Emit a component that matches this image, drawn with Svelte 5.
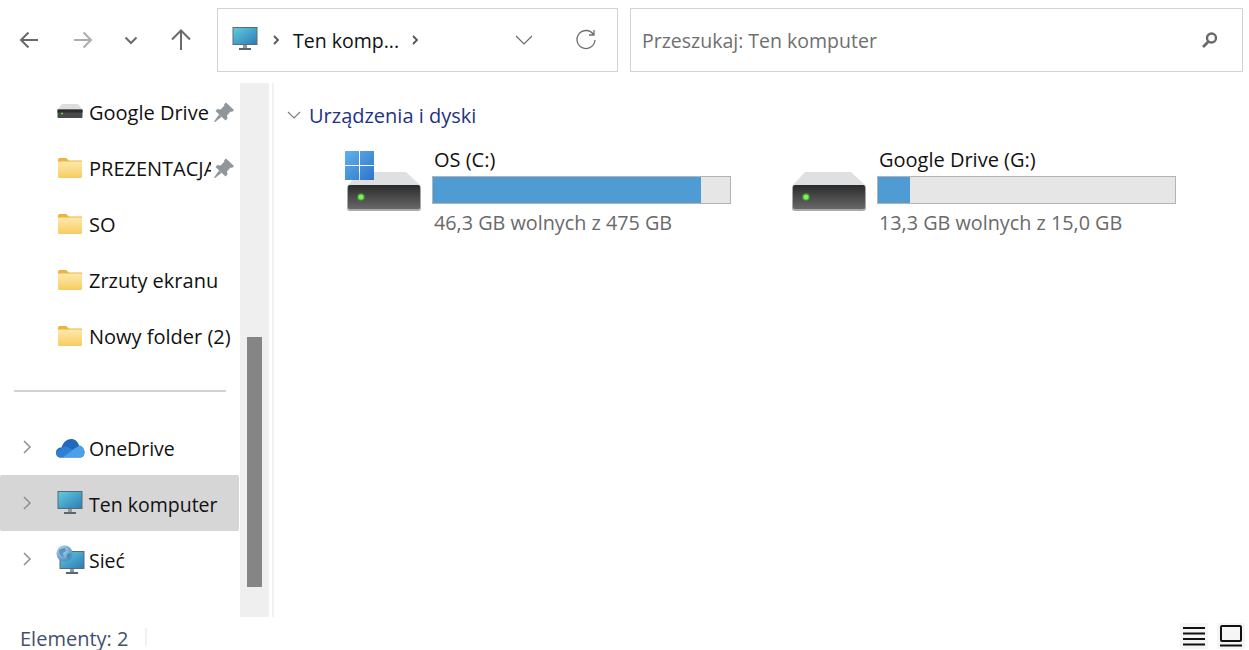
<script>
  const quick = [
    { name: 'Google Drive', icon: 'drive', pin: true },
    { name: 'PREZENTACJA', icon: 'folder', pin: true },
    { name: 'SO', icon: 'folder' },
    { name: 'Zrzuty ekranu', icon: 'folder' },
    { name: 'Nowy folder (2)', icon: 'folder' }
  ]
  const roots = [
    { name: 'OneDrive', icon: 'cloud' },
    { name: 'Ten komputer', icon: 'pc', active: true },
    { name: 'Sieć', icon: 'net' }
  ]
  const drives = [
    { name: 'OS (C:)', free: '46,3 GB wolnych z 475 GB', used: 90.2, win: true },
    { name: 'Google Drive (G:)', free: '13,3 GB wolnych z 15,0 GB', used: 10.9, win: false }
  ]
</script>

{#snippet pc(w)}
  <svg width={w} height={w} viewBox="0 0 26 26">
    <defs>
      <linearGradient id="screen" x1="0" y1="0" x2="1" y2="1">
        <stop offset="0" stop-color="#5fcbdc" />
        <stop offset="1" stop-color="#2f7cb8" />
      </linearGradient>
    </defs>
    <rect x="0.5" y="1" width="25" height="18" fill="#5d6a76" />
    <rect x="1.5" y="2" width="23" height="16" fill="url(#screen)" />
    <rect x="11" y="19" width="4" height="3" fill="#8d99a3" />
    <rect x="7" y="22" width="12" height="2" fill="#596570" />
  </svg>
{/snippet}

{#snippet driveBody()}
  <svg class="hdd" width="76" height="42" viewBox="0 0 76 42">
    <defs>
      <linearGradient id="front" x1="0" y1="0" x2="0" y2="1">
        <stop offset="0" stop-color="#2b2b2b" />
        <stop offset="1" stop-color="#686868" />
      </linearGradient>
    </defs>
    <path d="M14 2H60L74 15H2Z" fill="#dfe0e1" />
    <rect x="1" y="15" width="74" height="26" rx="3" fill="#a9a9a9" />
    <rect x="2" y="15" width="72" height="24" rx="2" fill="url(#front)" />
    <circle cx="15" cy="27" r="3.8" fill="#3fc82c" opacity="0.6" />
    <circle cx="15" cy="27" r="2.6" fill="#86ee55" />
  </svg>
{/snippet}

{#snippet winLogo()}
  <svg class="win" width="29" height="29" viewBox="0 0 29 29">
    <defs>
      <linearGradient id="wl" x1="0" y1="0" x2="1" y2="1">
        <stop offset="0" stop-color="#5fb2ea" />
        <stop offset="1" stop-color="#2f74ca" />
      </linearGradient>
    </defs>
    <path d="M0 0H14V14H0ZM15 0H29V14H15ZM0 15H14V29H0ZM15 15H29V29H15Z" fill="url(#wl)" />
  </svg>
{/snippet}

{#snippet navIcon(kind)}
  {#if kind === 'folder'}
    <svg width="26" height="22" viewBox="0 0 26 22">
      <defs>
        <linearGradient id="fold" x1="0" y1="0" x2="0" y2="1">
          <stop offset="0" stop-color="#fde9ac" />
          <stop offset="1" stop-color="#f6cd62" />
        </linearGradient>
      </defs>
      <path d="M1 2.5Q1 1 2.5 1H9L12 3.5H25V6H1Z" fill="#eeb33f" />
      <rect x="1" y="4.5" width="24" height="16.5" rx="1" fill="url(#fold)" />
    </svg>
  {:else if kind === 'drive'}
    <svg width="26" height="22" viewBox="0 0 26 22">
      <path d="M5 3H21L25.500 8.500H0.500Z" fill="#dcdede" />
      <rect x="0.500" y="8.500" width="25" height="8.500" rx="1" fill="#4a4a4a" />
      <rect x="0.500" y="8.500" width="25" height="3" fill="#2d2d2d" />
      <circle cx="5" cy="12.500" r="1" fill="#6fe04a" />
    </svg>
  {:else if kind === 'cloud'}
    <svg class="cloud" width="30" height="22" viewBox="0 0 30 22">
      <defs>
        <clipPath id="cl">
          <path d="M5 19.500C2 19.500 0 17.500 0 14.500C0 11.500 2.500 9.500 5.500 9.500C7 5 10.500 1 15 1C19 1 22 3.500 23 7.500C26.500 8 28.500 11 28.500 14.500C28.500 17.500 26.500 19.500 24 19.500Z" />
        </clipPath>
      </defs>
      <g clip-path="url(#cl)">
        <rect width="30" height="22" fill="#2268bd" />
        <path d="M0 14L9 8 20 13 6 20H0Z" fill="#2f7fd6" />
        <path d="M6 20L18 11 24 7 30 10V20Z" fill="#4ba0e8" />
      </g>
    </svg>
  {:else if kind === 'pc'}
    {@render pc(26)}
  {:else}
    <span class="net">
      {@render pc(26)}
      <svg class="globe" width="17" height="17" viewBox="0 0 17 17">
        <defs>
          <radialGradient id="gl" cx="0.35" cy="0.3" r="0.8">
            <stop offset="0" stop-color="#b9dcf2" />
            <stop offset="1" stop-color="#3f84bb" />
          </radialGradient>
        </defs>
        <circle cx="8.500" cy="8.500" r="8" fill="url(#gl)" />
        <path d="M3 5Q6 2.500 9 3L10 6 7 8 8 12 5 11 3 8Z" fill="#5b96bc" />
        <path d="M11 9L15 8 14 12 11 14Z" fill="#4d88ad" />
      </svg>
    </span>
  {/if}
{/snippet}

{#snippet chev()}
  <svg class="chev" width="10" height="16" viewBox="0 0 10 16"><path d="M2 2L8 8 2 14" fill="none" stroke="#8f8f8f" stroke-width="1.500" /></svg>
{/snippet}

{#snippet pinIcon()}
  <svg class="pin" width="20" height="20" viewBox="0 0 20 20">
    <path d="M12 0.500L20 8 18 10 16.500 9.500 13 13.500 13.500 16.500 11.500 18.500 1.500 9 3.500 7 6.500 7.500 10.500 3.500 10 2.500ZM5 12.500L7.500 15 1 20 0 19.500Z" fill="#8f979c" />
  </svg>
{/snippet}

<div class="app">
  <header class="toolbar">
    <nav class="arrows">
      <button class="b1" aria-label="Wstecz">
        <svg width="20" height="18" viewBox="0 0 20 18"><path d="M19 9H2M9.500 1.500L2 9 9.500 16.500" fill="none" stroke="#6a6a6a" stroke-width="2" /></svg>
      </button>
      <button class="b1" aria-label="Dalej">
        <svg width="20" height="18" viewBox="0 0 20 18"><path d="M1 9H18M10.500 1.500L18 9 10.500 16.500" fill="none" stroke="#adadad" stroke-width="2" /></svg>
      </button>
      <button class="b2" aria-label="Ostatnie">
        <svg width="14" height="9" viewBox="0 0 14 9"><path d="M1.500 1.500L7 7 12.500 1.500" fill="none" stroke="#6a6a6a" stroke-width="2" /></svg>
      </button>
      <button class="b3" aria-label="W górę">
        <svg width="20" height="22" viewBox="0 0 20 22"><path d="M10 21V2M1 10.500L10 1.500 19 10.500" fill="none" stroke="#6a6a6a" stroke-width="2" /></svg>
      </button>
    </nav>
    <div class="address box">
      {@render pc(26)}
      <svg class="sep1" width="8" height="12" viewBox="0 0 8 12"><path d="M2 2L6 6 2 10" fill="none" stroke="#555" stroke-width="1.800" /></svg>
      <span class="crumb">Ten komp...</span>
      <svg class="sep2" width="8" height="12" viewBox="0 0 8 12"><path d="M2 2L6 6 2 10" fill="none" stroke="#555" stroke-width="1.800" /></svg>
      <svg class="drop" width="18" height="10" viewBox="0 0 18 10"><path d="M1 1L9 9 17 1" fill="none" stroke="#6a6a6a" stroke-width="1.200" /></svg>
      <svg class="refresh" width="22" height="22" viewBox="0 0 22 22"><path d="M18.500 5.500A9 9 0 1 0 20 11M19 1V6H14" fill="none" stroke="#6e6e6e" stroke-width="1.300" /></svg>
    </div>
    <div class="search box">
      <span class="ph">Przeszukaj: Ten komputer</span>
      <svg width="18" height="18" viewBox="0 0 18 18"><circle cx="10.500" cy="7" r="4.500" fill="none" stroke="#6a6a6a" stroke-width="2.400" /><path d="M7.500 10.500L2 16" stroke="#6a6a6a" stroke-width="2.800" /></svg>
    </div>
  </header>

  <main class="body">
    <aside class="side">
      <div class="list">
        {#each quick as q}
          <div class="row">
            <span class="arrow"></span>
            <span class="ico">{@render navIcon(q.icon)}</span>
            <span class="label" class:clip={q.pin}>{q.name}</span>
            {#if q.pin}{@render pinIcon()}{/if}
          </div>
        {/each}
      </div>
      <div class="rule"></div>
      <div class="list">
        {#each roots as r}
          <div class="row" class:active={r.active}>
            <span class="arrow">{@render chev()}</span>
            <span class="ico">{@render navIcon(r.icon)}</span>
            <span class="label low">{r.name}</span>
          </div>
        {/each}
      </div>
    </aside>
    <div class="track"><div class="thumb"></div></div>
    <section class="content">
      <div class="group">
        <svg width="14" height="8" viewBox="0 0 14 8"><path d="M1 1L7 7 13 1" fill="none" stroke="#7a7a7a" stroke-width="1.100" /></svg>
        <span>Urządzenia i dyski</span>
      </div>
      <div class="tiles">
        {#each drives as d}
          <div class="tile">
            <div class="tile-ico">
              {@render driveBody()}
              {#if d.win}{@render winLogo()}{/if}
            </div>
            <div class="tile-info">
              <div class="name">{d.name}</div>
              <div class="bar"><div class="fill" style="width:{d.used}%"></div></div>
              <div class="free">{d.free}</div>
            </div>
          </div>
        {/each}
      </div>
    </section>
  </main>

  <footer class="status">
    <span class="count">Elementy: 2</span>
    <span class="tick"></span>
    <span class="views">
      <span class="vb">
        <svg width="24" height="20" viewBox="0 0 24 20"><path d="M1 2H23M1 7.500H23M1 13H23M1 18.500H23" stroke="#111" stroke-width="1.800" /></svg>
      </span>
      <span class="vb">
        <svg width="24" height="22" viewBox="0 0 24 22"><rect x="2" y="1" width="20" height="15" rx="1" fill="none" stroke="#111" stroke-width="2" /><path d="M1 20.500H23" stroke="#111" stroke-width="2" /></svg>
      </span>
    </span>
  </footer>
</div>

<style>
  :global(body) { margin: 0; background: #fff; }
  .app {
    width: 1249px;
    height: 650px;
    display: flex;
    flex-direction: column;
    overflow: hidden;
    font-family: "Open Sans", "Noto Sans", sans-serif;
    font-size: 20px;
    color: #111;
  }
  .toolbar {
    height: 83px;
    box-sizing: border-box;
    padding: 8px 6px 11px 2px;
    display: flex;
  }
  .arrows { display: flex; width: 215px; }
  .arrows button {
    border: 0;
    background: none;
    padding: 0;
    height: 64px;
    display: flex;
    align-items: center;
    justify-content: center;
  }
  .b1 { width: 54px; }
  .b2 { width: 42px; }
  .b3 { width: 58px; }
  .box {
    border: 1px solid #d2d2d2;
    box-sizing: border-box;
    height: 64px;
    display: flex;
    align-items: center;
  }
  .address { width: 401px; padding-left: 14px; }
  .address > svg:first-child { margin-top: -2px; }
  .sep1 { margin: 0 13px 0 14px; }
  .crumb { width: 118px; white-space: nowrap; font-size: 19.5px; }
  .drop { margin-left: 96px; }
  .refresh { margin-left: 42px; margin-top: 0; }
  .search {
    width: 613px;
    margin-left: 12px;
    padding: 0 23px 0 11px;
    justify-content: space-between;
  }
  .ph { color: #6f6f6f; font-size: 19.5px; padding-top: 1px; }
  .body { flex: 1; display: flex; min-height: 0; }
  .side { width: 240px; flex: none; padding-top: 1px; overflow: hidden; }
  .row {
    height: 56px;
    display: flex;
    align-items: center;
    border-radius: 2px;
    margin-right: 1px;
  }
  .row.active { background: #d6d6d6; }
  .chev { display: block; }
  .ico { width: 45px; height: 30px; padding-left: 13px; box-sizing: border-box; display: flex; align-items: center; }
  .cloud { margin-left: -1px; margin-top: 4px; }
  .label { white-space: nowrap; }
  .label.clip { width: 122px; overflow: hidden; flex: none; }
  .label.low { padding-top: 2px; font-size: 19.5px; }
  .row .arrow { width: 10px; padding-left: 22px; padding-right: 12px; display: flex; }
  .pin { margin-left: 3px; margin-top: -1px; flex: none; }
  .rule { height: 2px; background: #d2d2d2; margin: 26px 14px 27px; }
  .net { position: relative; display: block; width: 26px; height: 26px; margin: 7px 0 0 2px; }
  .globe { position: absolute; left: -3px; top: -5px; }
  .track { width: 29px; flex: none; background: #efefef; padding-left: 7px; box-sizing: border-box; }
  .thumb { width: 15px; height: 250px; margin-top: 254px; background: #858585; }
  .content {
    flex: 1;
    margin-left: 3px;
    border-left: 2px solid #f2f2f2;
    padding: 19px 0 0 13px;
  }
  .group {
    display: flex;
    align-items: center;
    gap: 8px;
    height: 26px;
    color: #1f3384;
  }
  .tiles { display: flex; margin-top: 19px; padding-left: 57px; }
  .tile { display: flex; width: 445px; flex: none; }
  .tile-ico { position: relative; width: 88px; height: 68px; flex: none; }
  .hdd { position: absolute; left: 2px; top: 23px; }
  .win { position: absolute; left: 1px; top: 4px; }
  .name { padding-left: 2px; line-height: 26px; height: 29px; }
  .bar {
    width: 299px;
    height: 28px;
    box-sizing: border-box;
    border: 1px solid #b4b4b4;
    background: #e6e6e6;
  }
  .fill { height: 100%; background: #4f9bd4; }
  .free { padding-left: 2px; margin-top: 6px; line-height: 26px; color: #6a6a6a; font-size: 19.8px; }
  .status {
    height: 33px;
    box-sizing: border-box;
    padding: 4px 4px 0 20px;
    display: flex;
    align-items: center;
    color: #42506b;
  }
  .count { width: 125px; margin-top: 7px; line-height: 20px; }
  .tick { width: 2px; height: 18px; margin-top: 3px; background: #f2f2f2; }
  .views { margin-left: auto; display: flex; gap: 9px; }
  .vb { width: 28px; height: 26px; background: #f5f5f5; border-radius: 3px; display: flex; align-items: center; justify-content: center; }
</style>
